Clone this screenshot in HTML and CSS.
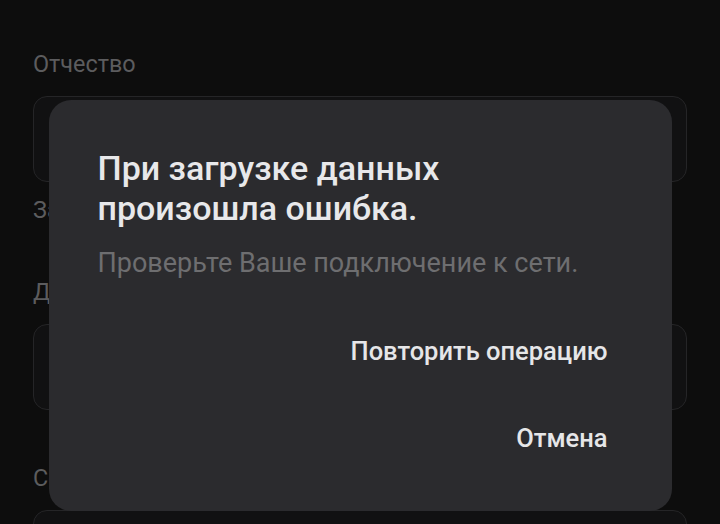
FILE: index.html
```html
<!DOCTYPE html>
<html lang="ru">
<head>
    <meta charset="UTF-8">
    <meta name="viewport" content="width=device-width, initial-scale=1.0">
    <title>Ошибка загрузки</title>
    <link rel="stylesheet" href="styles.css">
</head>
<body>
    <div class="form">
        <div class="field">
            <div class="label">Отчество</div>
            <div class="input"></div>
            <div class="hint">Заполните, если указано в паспорте</div>
        </div>
        <div class="field">
            <div class="label">Дата рождения</div>
            <div class="input"></div>
        </div>
        <div class="field">
            <div class="label">Серия и номер паспорта</div>
            <div class="input"></div>
        </div>
    </div>

    <div class="scrim">
        <div class="dialog">
            <h1 class="title">При загрузке данных произошла ошибка.</h1>
            <p class="message">Проверьте Ваше подключение к сети.</p>
            <div class="actions">
                <button class="action">Повторить операцию</button>
                <button class="action">Отмена</button>
            </div>
        </div>
    </div>
</body>
</html>
```

FILE: styles.css
```css
html, body {
    height: 524px;
    overflow: hidden;
}
body {
    margin: 0;
    background-color: #0d0d0d;
    font-family: Roboto, "Noto Sans", sans-serif;
}
.form {
    height: 524px;
    overflow: hidden;
    box-sizing: border-box;
    padding: 50px 33px 0 33px;
    display: flex;
    flex-direction: column;
    gap: 54px;
}
.field {
    display: flex;
    flex-direction: column;
}
.label,
.hint {
    font-size: 23.4px;
    line-height: 28px;
    color: #5c5c5e;
    white-space: nowrap;
}
.label {
    margin-bottom: 18px;
}
.hint {
    margin-top: 14px;
}
.input {
    flex-shrink: 0;
    height: 84px;
    border: 1px solid #252527;
    border-radius: 14px;
    background-color: #111112;
}
.scrim {
    position: absolute;
    top: 0;
    left: 0;
    right: 0;
    bottom: 0;
    display: flex;
    justify-content: center;
    align-items: flex-start;
    padding-top: 100px;
}
.dialog {
    width: 623px;
    height: 411px;
    box-sizing: border-box;
    background-color: #2b2b2e;
    border-radius: 22px;
    padding: 48px 64px 0 49px;
    display: flex;
    flex-direction: column;
}
.title {
    margin: 0;
    font-size: 34px;
    font-weight: 500;
    line-height: 40px;
    color: #e8e8ea;
    width: 420px;
}
.message {
    margin: 19px 0 0 0;
    font-size: 27px;
    line-height: 32px;
    color: #6e6e70;
    white-space: nowrap;
}
.actions {
    margin-top: 57px;
    display: flex;
    flex-direction: column;
    align-items: flex-end;
    gap: 57px;
}
.action {
    background: none;
    border: none;
    padding: 0;
    font-family: inherit;
    font-size: 25.5px;
    font-weight: 500;
    line-height: 30px;
    color: #e6e6e8;
}
```
